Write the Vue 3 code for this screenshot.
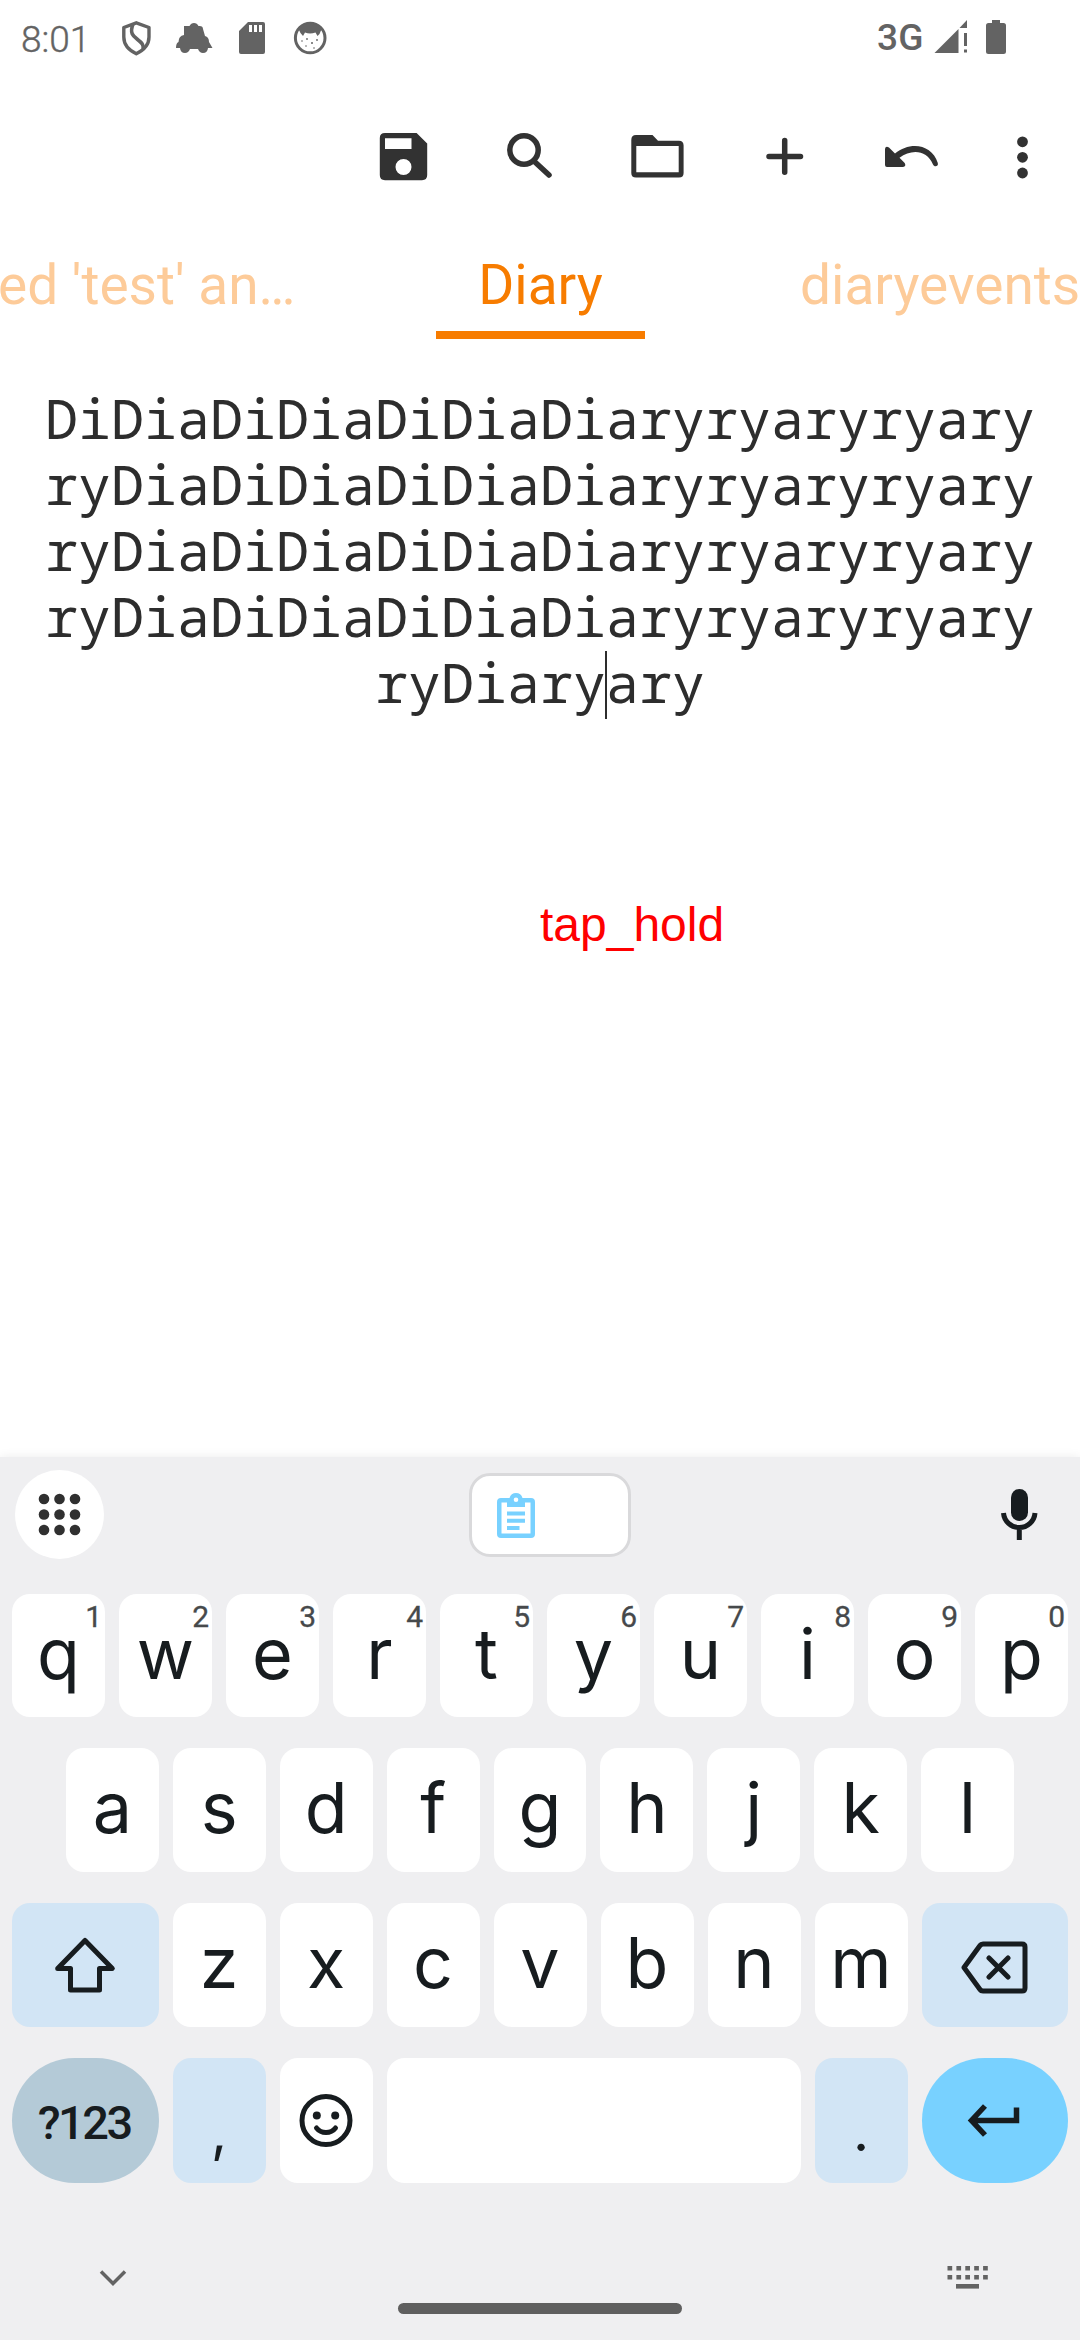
<script setup>
const row1 = [...'qwertyuiop'].map((c, i) => ({ c, hint: String((i + 1) % 10) }))
const row2 = [...'asdfghjkl']
const row3 = [...'zxcvbnm']
const repeated = 'ryDiaDiDiaDiDiaDiaryryaryryary'
const lines = ['DiDiaDiDiaDiDiaDiaryryaryryary', repeated, repeated, repeated]
const gridPoints = [0, 1, 2].flatMap(y => [0, 1, 2].map(x => ({ x: 29 + x * 15.5, y: 29 + y * 15.5 })))
</script>

<template>
  <div class="screen">
    <header class="status">
      <span class="clock">8:01</span>
      <svg class="status-left" width="240" height="76" viewBox="100 0 240 76">
        <path d="M136.300 22.800L149 27.500V37C149 45 143 50.500 136.300 53.700C129.500 50.500 123.800 45 123.800 37V27.500Z" fill="none" stroke="#636363" stroke-width="3.400" stroke-linejoin="round" />
        <path d="M133 24C129.500 33 133 36 137 39C142 43 144 45 143 49" fill="none" stroke="#636363" stroke-width="3.600" />
        <path d="M184 26H189.500Q191 23 194 23Q197 23 198.500 26Q203 25.500 203 29L205 36Q209 37 209 42L212.500 48H208Q207.500 53 203 53Q199.500 53 198 49H190Q188.500 53 185 53Q180.500 53 180 48H176Q176 43 178.500 42Q178.500 36 184 35Z" fill="#636363" />
        <path fill-rule="evenodd" d="M248 22H263Q265 22 265 24V52Q265 54 263 54H241Q239 54 239 52V31ZM249 25V32H252V25ZM254 25V32H257V25ZM259 25V32H262V25Z" fill="#636363" />
        <circle cx="310.200" cy="38" r="14.800" fill="none" stroke="#636363" stroke-width="3" />
        <path d="M298 28Q310 19 322 28L319.500 34L317.500 36L315.500 32.500Q310 34.500 305 32.500L303 36L300.500 33Z" fill="#636363" />
        <g fill="#636363"><circle cx="302" cy="41" r=".8" /><circle cx="307" cy="39" r=".9" /><circle cx="312" cy="43" r="1" /><circle cx="317" cy="40" r=".9" /><circle cx="306" cy="46" r=".8" /><circle cx="314" cy="48" r=".8" /></g>
      </svg>
      <span class="network">3G</span>
      <svg class="status-right" width="80" height="76" viewBox="930 0 80 76" fill="#636363">
        <path d="M934.500 53L958.500 29V53ZM959.500 28L967 20V28ZM964 33H967V46H964ZM964 49.500H967V52.500H964Z" />
        <path d="M992 20H1000V23H1003.500Q1006 23 1006 25.500V51.500Q1006 54 1003.500 54H988.500Q986 54 986 51.500V25.500Q986 23 988.500 23H992Z" />
      </svg>
    </header>

    <nav class="toolbar">
      <svg width="730" height="120" viewBox="350 100 730 120" fill="none" stroke="#323232" stroke-width="5.500" stroke-linecap="round" stroke-linejoin="round">
        <path fill="#323232" stroke="none" fill-rule="evenodd" d="M385 133H416.600L427.200 143.500V175Q427.200 180.200 422 180.200H385Q379.800 180.200 379.800 175V138Q379.800 133 385 133ZM385 138.300V149H411.500V138.300ZM403.500 159A8 8 0 1 0 403.500 175A8 8 0 1 0 403.500 159Z" />
        <circle cx="524" cy="150" r="14.200" /><path d="M536 163L549 175" />
        <path fill="#323232" stroke="none" fill-rule="evenodd" d="M636 135H652.500L658 140.700H679Q683.600 140.700 683.600 145.500V173Q683.600 177.500 679 177.500H636Q631.300 177.500 631.300 173V140Q631.300 135 636 135ZM636.300 146V172.300H678.700V146Z" />
        <path d="M784.700 140.500V172.200M769 156.500H800.500" />
        <path fill="#323232" stroke="none" d="M885 149Q885.500 145.500 889 147.500L895 153.500C910 141 932 144 937.800 163C938.800 166.500 934.200 167.500 933 164.500C927 149.500 911 149 899.500 157.800L904.700 163Q906.500 166.500 903 167H887Q885 167 885 165Z" />
        <g fill="#323232" stroke="none"><circle cx="1022.500" cy="141.800" r="5.400" /><circle cx="1022.500" cy="157.300" r="5.400" /><circle cx="1022.500" cy="173" r="5.400" /></g>
      </svg>
    </nav>

    <nav class="tabs">
      <div class="tab previous">ed 'test' an…</div>
      <div class="tab active">Diary</div>
      <div class="tab next">diaryevents</div>
    </nav>

    <main class="editor">
      <div v-for="(line, i) in lines" :key="i" class="line">{{ line }}</div>
      <div class="line">ryDiary<i class="caret"></i>ary</div>
      <div class="gesture">tap_hold</div>
    </main>

    <section class="keyboard">
      <div class="suggestions">
        <div class="apps">
          <svg width="89" height="89"><circle v-for="(p, i) in gridPoints" :key="i" :cx="p.x" :cy="p.y" r="5.300" fill="#303030" /></svg>
        </div>
        <div class="clip">
          <svg width="38" height="46" viewBox="0 0 38 46">
            <path fill="#78d1ff" fill-rule="evenodd" d="M4 5H12.500Q14 0 19 0Q24 0 25.500 5H34Q38 5 38 9V41Q38 45 34 45H4Q0 45 0 41V9Q0 5 4 5ZM4.500 9.500V40.500H33.500V9.500H28V14H10V9.500ZM19 4.500A2.300 2.300 0 1 0 19 9.100A2.300 2.300 0 1 0 19 4.500Z" />
            <path stroke="#78d1ff" stroke-width="4" d="M10 20.500H28M10 27.700H28M10 35H22.500" />
          </svg>
        </div>
        <svg class="mic" width="38" height="52" viewBox="1000 1488 38 52">
          <rect x="1011" y="1489" width="17" height="32" rx="8.500" fill="#171c1f" />
          <path d="M1003.500 1513A15.800 15.800 0 0 0 1035 1513M1019.300 1529V1540" fill="none" stroke="#171c1f" stroke-width="5" />
        </svg>
      </div>

      <div class="row first">
        <div v-for="k in row1" :key="k.c" class="key"><span class="hint">{{ k.hint }}</span><span>{{ k.c }}</span></div>
      </div>
      <div class="row home">
        <div v-for="c in row2" :key="c" class="key">{{ c }}</div>
      </div>
      <div class="row">
        <div class="key wide tint">
          <svg width="62" height="60" viewBox="54 1935 62 60"><path d="M85 1940.500L112.300 1968.500H99.500V1990H70.500V1968.500H57.700Z" /></svg>
        </div>
        <div v-for="c in row3" :key="c" class="key">{{ c }}</div>
        <div class="key wide tint">
          <svg width="68" height="60" viewBox="960 1935 68 60"><path d="M963 1967.500L979 1945.500Q980 1944 982 1944H1021Q1024 1944 1024 1947V1988Q1024 1991 1021 1991H982Q980 1991 979 1989.500ZM988 1958L1007 1977M1007 1958L988 1977" /></svg>
        </div>
      </div>
      <div class="row last">
        <div class="key wide symbols">?123</div>
        <div class="key tint mark">,</div>
        <div class="key">
          <svg width="56" height="56" viewBox="-28 -28 56 56"><circle r="24" /><g fill="#171c1f" stroke="none"><circle cx="-9.200" cy="-5" r="4" /><circle cx="9.200" cy="-5" r="4" /></g><path d="M-9.500 7.500Q-6 12 0 12Q6 12 9.500 7.500" /></svg>
        </div>
        <div class="key space"></div>
        <div class="key tint mark">.</div>
        <div class="key wide enter">
          <svg width="60" height="40" viewBox="964 2103 60 40"><path class="sharp" d="M984 2108.500L970.500 2123L984 2137.500M971 2123H1015.500V2110" /></svg>
        </div>
      </div>

      <footer class="system">
        <svg width="1080" height="157" viewBox="0 2183 1080 157">
          <path d="M101 2271.500L113 2283.500L125 2271.500" fill="none" stroke="#636363" stroke-width="3.500" />
          <path d="M947.500 2268.300H988M947.500 2277.300H988" stroke="#636363" stroke-width="4.600" stroke-dasharray="4.700 4.200" />
          <path d="M956 2286.300H979" stroke="#636363" stroke-width="4.600" />
          <rect x="398" y="2303" width="284" height="11" rx="5.500" fill="#5f5f5f" />
        </svg>
      </footer>
    </section>
  </div>
</template>

<style>
body { margin: 0; }
</style>

<style scoped>
.screen { width: 1080px; height: 2340px; overflow: hidden; background: #fff; display: flex; flex-direction: column; font-family: Roboto, sans-serif; }
svg { display: block; flex: none; }
.status { height: 76px; display: flex; flex: none; color: #636363; font-size: 37px; line-height: 79px; }
.clock { width: 79px; padding-left: 21px; letter-spacing: 0; font-weight: 300; -webkit-text-stroke: .4px #636363; }
.network { width: 53px; margin-left: 537px; font-weight: 500; letter-spacing: .3px; line-height: 75px; }
.toolbar { height: 154px; box-sizing: border-box; padding-top: 24px; display: flex; justify-content: flex-end; flex: none; }
.tabs { height: 109px; flex: none; display: flex; justify-content: space-between; font-size: 55px; line-height: 110px; color: #fdcb99; white-space: nowrap; }
.tab { box-sizing: border-box; height: 109px; }
.previous { width: 436px; text-indent: -2px; }
.active { width: 209px; text-align: center; color: #f77c00; border-bottom: 8px solid #f77c00; }
.next { width: 435px; padding-left: 155px; }
.editor { height: 1118px; flex: none; box-sizing: border-box; padding-top: 46px; color: #2d2d2d; }
.line { font: 55px/66px "Noto Sans Mono", "DejaVu Sans Mono", monospace; text-align: center; white-space: pre; height: 66px; }
.caret { display: inline-block; width: 2px; height: 68px; margin: 0 -1px; background: #2d2d2d; vertical-align: -16px; }
.gesture { margin: 183px 0 0 540px; font: 48px/54px "Liberation Sans", sans-serif; color: #f00; }
.keyboard { flex: 1; background: #efeff1; box-shadow: 0 0 10px rgba(0, 0, 0, .08); }
.suggestions { height: 137px; box-sizing: border-box; padding: 13px 42px 0 15px; display: flex; justify-content: space-between; }
.apps { width: 89px; height: 89px; border-radius: 50%; background: #fff; }
.clip { width: 162px; height: 84px; margin: 3px 0 0 -5px; box-sizing: border-box; border: 3px solid #d9d9db; border-radius: 21px; background: #fff; padding: 17px 0 0 25px; }
.mic { margin-top: 18px; }
.row { display: flex; gap: 14px; height: 124px; padding: 0 12px; margin-bottom: 31px; }
.first { height: 123px; }
.home { padding: 0 66px; }
.last { margin-bottom: 0; height: 125px; }
.key { flex: 1 1 0; position: relative; border-radius: 18px; background: #fff; color: #171c1f; font: 70px/120px Inter, sans-serif; text-align: center; }
.wide { flex: 0 0 146.500px; }
.space { flex: 0 0 414px; }
.tint { background: #d2e5f5; }
.key svg { height: 100%; margin: 0 auto; fill: none; stroke: #171c1f; stroke-width: 5; stroke-linecap: round; stroke-linejoin: round; }
.key svg .sharp { stroke-linecap: butt; stroke-linejoin: miter; stroke-width: 5.500; }
.hint { position: absolute; right: 3px; top: 6px; font: 400 30px/34px Roboto, sans-serif; color: #46494b; -webkit-text-stroke: .3px #46494b; }
.symbols { border-radius: 63px; background: #b4cad7; font: 500 47px/129px Roboto, sans-serif; letter-spacing: -2.500px; text-indent: -2px; }
.mark { font-size: 56px; line-height: 147px; }
.enter { border-radius: 63px; background: #78d1ff; }
</style>
